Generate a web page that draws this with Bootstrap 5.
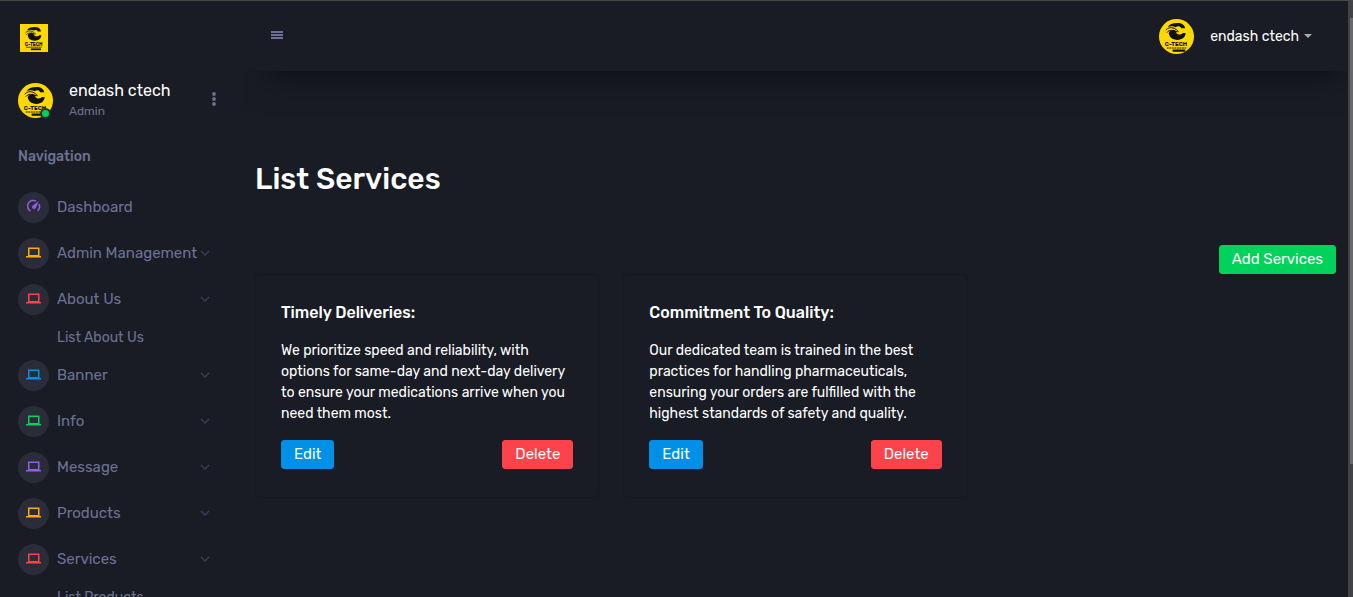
<!DOCTYPE html>
<html lang="en">
<head>
<meta charset="utf-8">
<meta name="viewport" content="width=device-width, initial-scale=1">
<title>List Services</title>
<link href="https://cdn.jsdelivr.net/npm/bootstrap@5.3.0/dist/css/bootstrap.min.css" rel="stylesheet">
<style>
  :root { --panel: #191c24; --muted: #6c7293; --disc: #2a2d39; }
  body { background: var(--panel); color: #fff; font-family: Rubik, Roboto, "Liberation Sans", sans-serif; font-size: 14px; line-height: 21px; }
  .shell { height: 100vh; overflow: hidden; border-top: 1px solid #444847; }
  .side { width: 244px; background: var(--panel); z-index: 2; overflow: hidden; }
  .side-brand { padding: 23px 20px 0; height: 70px; }
  .profile { padding: 0 26px 0 18px; height: 59px; }
  .profile-name { font-size: 16px; line-height: 20px; }
  .profile-role { font-size: 12px; line-height: 20px; color: var(--muted); }
  .online-dot { width: 11px; height: 11px; right: 2px; bottom: -1px; border: 2px solid var(--disc); background: #00d25b; }
  .side-heading { height: 54px; padding: 0 18px; margin: 0; font-size: 14px; font-weight: 500; color: var(--muted); }
  .side a { color: var(--muted); text-decoration: none; }
  .side-link { height: 46px; padding: 0 34px 0 18px; font-size: 15px; white-space: nowrap; }
  .side-sub { height: 30px; padding-left: 57px; font-size: 14px; }
  .disc { width: 31px; height: 31px; margin-right: 8px; padding-bottom: 2px; flex-shrink: 0; background: var(--disc); }
  .violet { color: #8f5fe8; } .amber { color: #ffab00; } .red { color: #fc424a; } .blue { color: #0090e7; } .green { color: #00d25b; }
  .chevron { color: #3c4056; }
  .topbar { height: 70px; padding: 0 36px 0 27px; background: var(--panel); box-shadow: 8px 19px 34px -15px rgba(0, 0, 0, .5); }
  .plain { background: none; border: 0; padding: 0; color: var(--muted); }
  .menu-toggle { padding-bottom: 2px; }
  .user-menu { font-size: 14px; color: #fff; }
  .user-menu::after { margin-left: 5px; color: #a9abb3; border-top-width: 4px; border-left-width: 4px; border-right-width: 4px; }
  .content { padding: 86px 12px 0 11px; }
  .page-title { font-size: 30px; line-height: 44px; font-weight: 500; margin: 0 0 44px; }
  .btn-app { --bs-btn-color: #fff; --bs-btn-hover-color: #fff; --bs-btn-font-size: 15px; --bs-btn-padding-x: 12px; --bs-btn-padding-y: 3px; --bs-btn-border-radius: 3px; line-height: 21px; }
  .btn-add { --bs-btn-bg: #00d25b; --bs-btn-border-color: #00d25b; --bs-btn-hover-bg: #00b24d; }
  .btn-edit { --bs-btn-bg: #0090e7; --bs-btn-border-color: #0090e7; --bs-btn-hover-bg: #007ac4; }
  .btn-del { --bs-btn-bg: #fc424a; --bs-btn-border-color: #fc424a; --bs-btn-hover-bg: #e0353d; }
  .service { --bs-card-bg: var(--panel); --bs-card-color: #fff; --bs-card-border-color: #15181f; --bs-card-border-radius: 4px; --bs-card-spacer-x: 25px; --bs-card-spacer-y: 28px; }
  .service-title { font-size: 16px; line-height: 20px; font-weight: 500; margin: 0 0 17px; }
  .rail { width: 5px; background: #424242; padding: 17px 0 0 2px; }
  .rail-thumb { height: 77%; background: #686868; }
</style>
</head>
<body>
<svg class="d-none" aria-hidden="true">
  <symbol id="logo" viewBox="0 0 36 36">
    <rect width="36" height="36" fill="#ffd800"/>
    <path d="M27 9.500C26.500 6 23.500 4 19 4c-5 0-8.500 1.500-10 4.200 3-1.200 6-1 8.200.3 2-1.500 4.600-1.200 5.600 1zM15 11l6 2.500-3.500-.2c.8 1.800 2 2.700 4 2.700 1.500 0 2.500-.8 3-1.500H27.500c-.5 4.500-3.500 7-8.500 7-5.500 0-8.500-2.800-9-7l1-2z" fill="#111"/>
    <path d="M7 11.500c2-2.500 5-3.300 8.500-2 2 .8 3.500 2 4.500 3.500M8 14c1.500-2 4-3 7-2" fill="none" stroke="#111" stroke-width="1"/>
    <text x="17.500" y="28" text-anchor="middle" font-family="Rubik, Roboto, sans-serif" font-size="6" font-weight="700" fill="#111">C-TECH</text>
    <path d="M8 29.800h20" stroke="#111" stroke-width="1.200" stroke-dasharray="2 .6"/>
    <path d="M14 32.500h13" stroke="#111" stroke-width="2.200"/>
  </symbol>
  <symbol id="laptop" viewBox="0 0 15 11"><path d="M2.750 1.250h10v7.500h-10zM0 9.750h15" fill="none" stroke="currentColor" stroke-width="1.500"/></symbol>
  <symbol id="gauge" viewBox="0 0 14 14"><path d="M3.400 12A5.500 5.500 0 0 1 9.200 2.200M11.800 5.200a5.500 5.500 0 0 1-1.200 6.800" fill="none" stroke="currentColor" stroke-width="1.500"/><path d="M11.800 2.200 9 8.600A2 2 0 1 1 6 6.300z" fill="currentColor"/></symbol>
  <symbol id="chev" viewBox="0 0 10 6"><path d="m1 1 4 4 4-4" fill="none" stroke="currentColor" stroke-width="1.300"/></symbol>
</svg>

<div class="shell d-flex">
  <nav class="side flex-shrink-0 position-relative" aria-label="Main">
    <div class="side-brand"><a href="#" class="d-block lh-1" aria-label="Home"><svg width="28" height="28"><use href="#logo"/></svg></a></div>
    <div class="profile d-flex align-items-center">
      <div class="position-relative me-3 lh-1">
        <svg class="rounded-circle d-block" width="35" height="35"><use href="#logo"/></svg>
        <span class="online-dot position-absolute rounded-circle"></span>
      </div>
      <div>
        <div class="profile-name">endash ctech</div>
        <div class="profile-role">Admin</div>
      </div>
      <button type="button" class="plain ms-auto lh-1" aria-label="Profile options"><svg width="8" height="20" viewBox="0 0 8 20" fill="currentColor"><circle cx="4" cy="3" r="1.900"/><circle cx="4" cy="8" r="1.900"/><circle cx="4" cy="13" r="1.900"/></svg></button>
    </div>
    <h2 class="side-heading d-flex align-items-center">Navigation</h2>
    <ul class="list-unstyled m-0">
      <li><a href="#" class="side-link d-flex align-items-center"><span class="disc violet rounded-circle d-flex align-items-center justify-content-center"><svg width="14" height="14"><use href="#gauge"/></svg></span>Dashboard</a></li>
      <li><a href="#" class="side-link d-flex align-items-center"><span class="disc amber rounded-circle d-flex align-items-center justify-content-center"><svg width="15" height="11"><use href="#laptop"/></svg></span>Admin Management<svg class="chevron ms-auto" width="10" height="6"><use href="#chev"/></svg></a></li>
      <li><a href="#" class="side-link d-flex align-items-center"><span class="disc red rounded-circle d-flex align-items-center justify-content-center"><svg width="15" height="11"><use href="#laptop"/></svg></span>About Us<svg class="chevron ms-auto" width="10" height="6"><use href="#chev"/></svg></a>
        <a href="#" class="side-sub d-flex align-items-center">List About Us</a></li>
      <li><a href="#" class="side-link d-flex align-items-center"><span class="disc blue rounded-circle d-flex align-items-center justify-content-center"><svg width="15" height="11"><use href="#laptop"/></svg></span>Banner<svg class="chevron ms-auto" width="10" height="6"><use href="#chev"/></svg></a></li>
      <li><a href="#" class="side-link d-flex align-items-center"><span class="disc green rounded-circle d-flex align-items-center justify-content-center"><svg width="15" height="11"><use href="#laptop"/></svg></span>Info<svg class="chevron ms-auto" width="10" height="6"><use href="#chev"/></svg></a></li>
      <li><a href="#" class="side-link d-flex align-items-center"><span class="disc violet rounded-circle d-flex align-items-center justify-content-center"><svg width="15" height="11"><use href="#laptop"/></svg></span>Message<svg class="chevron ms-auto" width="10" height="6"><use href="#chev"/></svg></a></li>
      <li><a href="#" class="side-link d-flex align-items-center"><span class="disc amber rounded-circle d-flex align-items-center justify-content-center"><svg width="15" height="11"><use href="#laptop"/></svg></span>Products<svg class="chevron ms-auto" width="10" height="6"><use href="#chev"/></svg></a></li>
      <li><a href="#" class="side-link d-flex align-items-center"><span class="disc red rounded-circle d-flex align-items-center justify-content-center"><svg width="15" height="11"><use href="#laptop"/></svg></span>Services<svg class="chevron ms-auto" width="10" height="6"><use href="#chev"/></svg></a>
        <a href="#" class="side-sub d-flex align-items-center">List Products</a></li>
    </ul>
  </nav>

  <div class="flex-grow-1 overflow-hidden">
    <header class="topbar d-flex align-items-center justify-content-between">
      <button type="button" class="plain menu-toggle d-flex" aria-label="Toggle sidebar"><svg width="12" height="10" viewBox="0 0 12 10"><path d="M0 2h12M0 5h12M0 8h12" stroke="currentColor" stroke-width="1.800"/></svg></button>
      <div class="dropdown">
        <button type="button" class="plain user-menu dropdown-toggle d-flex align-items-center" data-bs-toggle="dropdown"><svg class="rounded-circle me-3" width="35" height="35"><use href="#logo"/></svg>endash ctech</button>
      </div>
    </header>
    <main class="content">
      <h1 class="page-title">List Services</h1>
      <div class="d-flex justify-content-end"><button type="button" class="btn btn-app btn-add">Add Services</button></div>
      <div class="row row-cols-3 g-4 mt-0">
        <div class="col mt-0">
          <article class="card service">
            <div class="card-body">
              <h2 class="service-title">Timely Deliveries:</h2>
              <p>We prioritize speed and reliability, with options for same-day and next-day delivery to ensure your medications arrive when you need them most.</p>
              <div class="d-flex justify-content-between"><button type="button" class="btn btn-app btn-edit">Edit</button><button type="button" class="btn btn-app btn-del">Delete</button></div>
            </div>
          </article>
        </div>
        <div class="col mt-0">
          <article class="card service">
            <div class="card-body">
              <h2 class="service-title">Commitment To Quality:</h2>
              <p>Our dedicated team is trained in the best practices for handling pharmaceuticals, ensuring your orders are fulfilled with the highest standards of safety and quality.</p>
              <div class="d-flex justify-content-between"><button type="button" class="btn btn-app btn-edit">Edit</button><button type="button" class="btn btn-app btn-del">Delete</button></div>
            </div>
          </article>
        </div>
      </div>
    </main>
  </div>
  <div class="rail flex-shrink-0" aria-hidden="true"><div class="rail-thumb"></div></div>
</div>
<script src="https://cdn.jsdelivr.net/npm/bootstrap@5.3.0/dist/js/bootstrap.bundle.min.js"></script>
</body>
</html>
